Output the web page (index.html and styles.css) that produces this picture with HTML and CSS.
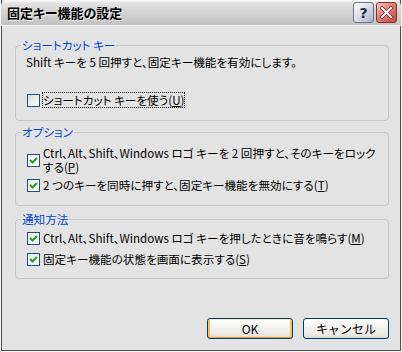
FILE: index.html
```html
<!DOCTYPE html>
<html lang="ja">
<head>
    <meta charset="UTF-8">
    <title>固定キー機能の設定</title>
    <link rel="stylesheet" href="styles.css">
</head>
<body>
    <div class="window">
        <div class="titlebar">
            <span class="title">固定キー機能の設定</span>
            <div class="caption-buttons">
                <span class="cap-btn help">?</span>
                <span class="cap-btn close">
                    <svg width="13" height="13" viewBox="0 0 13 13">
                        <path d="M2 2 L11 11 M11 2 L2 11" stroke="#7a1e1e" stroke-width="3.4" stroke-linecap="square"/>
                        <path d="M2 2 L11 11 M11 2 L2 11" stroke="#ffffff" stroke-width="2" stroke-linecap="square"/>
                    </svg>
                </span>
            </div>
        </div>

        <div class="client">
            <fieldset class="group group-shortcut">
                <legend>ショートカット キー</legend>
                <p class="desc">Shift キーを 5 回押すと、固定キー機能を有効にします。</p>
                <label class="check">
                    <span class="box"></span>
                    <span class="text focus">ショートカット キーを使う(<u>U</u>)</span>
                </label>
            </fieldset>

            <fieldset class="group group-options">
                <legend>オプション</legend>
                <label class="check multi">
                    <span class="box checked">
                        <svg width="9" height="9" viewBox="0 0 9 9"><path d="M1 4 L3.5 6.5 L8 2" stroke="#21a121" stroke-width="2.2" fill="none"/></svg>
                    </span>
                    <span class="text">Ctrl、Alt、Shift、Windows ロゴ キーを 2 回押すと、そのキーをロック<br>する(<u>P</u>)</span>
                </label>
                <label class="check">
                    <span class="box checked">
                        <svg width="9" height="9" viewBox="0 0 9 9"><path d="M1 4 L3.5 6.5 L8 2" stroke="#21a121" stroke-width="2.2" fill="none"/></svg>
                    </span>
                    <span class="text">2 つのキーを同時に押すと、固定キー機能を無効にする(<u>T</u>)</span>
                </label>
            </fieldset>

            <fieldset class="group group-notify">
                <legend>通知方法</legend>
                <label class="check">
                    <span class="box checked">
                        <svg width="9" height="9" viewBox="0 0 9 9"><path d="M1 4 L3.5 6.5 L8 2" stroke="#21a121" stroke-width="2.2" fill="none"/></svg>
                    </span>
                    <span class="text">Ctrl、Alt、Shift、Windows ロゴ キーを押したときに音を鳴らす(<u>M</u>)</span>
                </label>
                <label class="check">
                    <span class="box checked">
                        <svg width="9" height="9" viewBox="0 0 9 9"><path d="M1 4 L3.5 6.5 L8 2" stroke="#21a121" stroke-width="2.2" fill="none"/></svg>
                    </span>
                    <span class="text">固定キー機能の状態を画面に表示する(<u>S</u>)</span>
                </label>
            </fieldset>

            <div class="dialog-buttons">
                <button class="btn default">OK</button>
                <button class="btn">キャンセル</button>
            </div>
        </div>
    </div>
</body>
</html>
```

FILE: styles.css
```css
* {
    margin: 0;
    padding: 0;
    box-sizing: border-box;
}

html, body {
    background-color: #f4f4f4;
    font-family: "Noto Sans CJK JP", "Noto Sans", sans-serif;
    font-size: 11.6px;
    color: #000;
    font-feature-settings: "palt";
}

.window {
    width: 400px;
    height: 351px;
    margin-left: 1px;
    border: 1px solid #4e4e4e;
    border-top: none;
    background-color: #e3e3e3;
    display: flex;
    flex-direction: column;
}

/* title bar */
.titlebar {
    height: 26px;
    margin: 0 -1px;
    padding: 0 4px 0 6px;
    display: flex;
    align-items: center;
    justify-content: space-between;
    border-radius: 6px 6px 0 0;
    border-bottom: 1px solid #f2f2f2;
    background: linear-gradient(#fdfdfd 0, #e4e4e4 3px, #d6d6d6 40%, #cacaca 80%, #c2c2c2 100%);
}

.title {
    font-size: 13px;
    font-weight: bold;
    line-height: 16px;
    text-shadow: 1px 1px 0 #f0f0f0;
}

.caption-buttons {
    display: flex;
    gap: 2px;
}

.cap-btn {
    width: 21px;
    height: 21px;
    border-radius: 3px;
    display: flex;
    align-items: center;
    justify-content: center;
}

.help {
    border: 1px solid #6e7392;
    background: linear-gradient(135deg, #ffffff 0, #dfe1ea 45%, #aab0c8 100%);
    color: #23294a;
    font-family: "DejaVu Sans", sans-serif;
    font-weight: bold;
    font-size: 14px;
    line-height: 1;
}

.close {
    border: 1px solid #8e2c2c;
    background: linear-gradient(135deg, #f6c8c4 0, #e08a84 40%, #c9443c 100%);
}

/* client area */
.client {
    flex: 1;
    padding: 12px 11px 0 13px;
}

.group {
    border: 1px solid #c6c6c6;
    border-radius: 4px;
    padding: 0 10px 13px 10px;
}

.group legend {
    color: #0046d5;
    line-height: 14px;
    padding: 0 1px;
    margin-left: -5px;
}

.group-options {
    margin-top: 4px;
    padding-bottom: 13px;
}

.group-notify {
    margin-top: 6px;
    padding-bottom: 12px;
}

.desc {
    margin-top: 3px;
    line-height: 14px;
    white-space: nowrap;
}

.check {
    display: flex;
    align-items: center;
    gap: 3px;
    line-height: 14px;
    padding-left: 1px;
    white-space: nowrap;
}

.group-shortcut .check {
    margin-top: 24px;
}

.group-options .check.multi {
    margin-top: 7px;
}

.group-options .check + .check {
    margin-top: 4px;
}

.group-notify .check {
    margin-top: 5px;
}

.group-notify .check + .check {
    margin-top: 7px;
}

.box {
    flex: none;
    width: 13px;
    height: 13px;
    border: 1px solid #1c5180;
    background: linear-gradient(135deg, #dcdcd6 0, #f4f4f2 70%, #ffffff 100%);
    display: flex;
    align-items: center;
    justify-content: center;
}

.box.checked {
    background: linear-gradient(135deg, #e8e8e4 0, #ffffff 60%);
}

.text u {
    text-decoration-thickness: 1px;
    text-underline-offset: 1px;
}

.focus {
    outline: 1px dotted #000;
    outline-offset: 0;
}

/* dialog buttons */
.dialog-buttons {
    margin-top: 39px;
    display: flex;
    justify-content: flex-end;
    gap: 10px;
}

.btn {
    width: 86px;
    height: 21px;
    border: 1px solid #003c74;
    border-radius: 3px;
    background: linear-gradient(#ffffff 0, #f4f4f0 40%, #ebeae5 85%, #d8d4cb 100%);
    font-family: "Noto Sans CJK JP", "Noto Sans", sans-serif;
    font-size: 12px;
    line-height: 1;
    color: #000;
}

.btn.default {
    box-shadow: inset 0 1px 0 #fee9b2, inset 0 -1px 0 #f0a020, inset 2px 0 0 #f8c35a, inset -2px 0 0 #f8c35a;
}
```
